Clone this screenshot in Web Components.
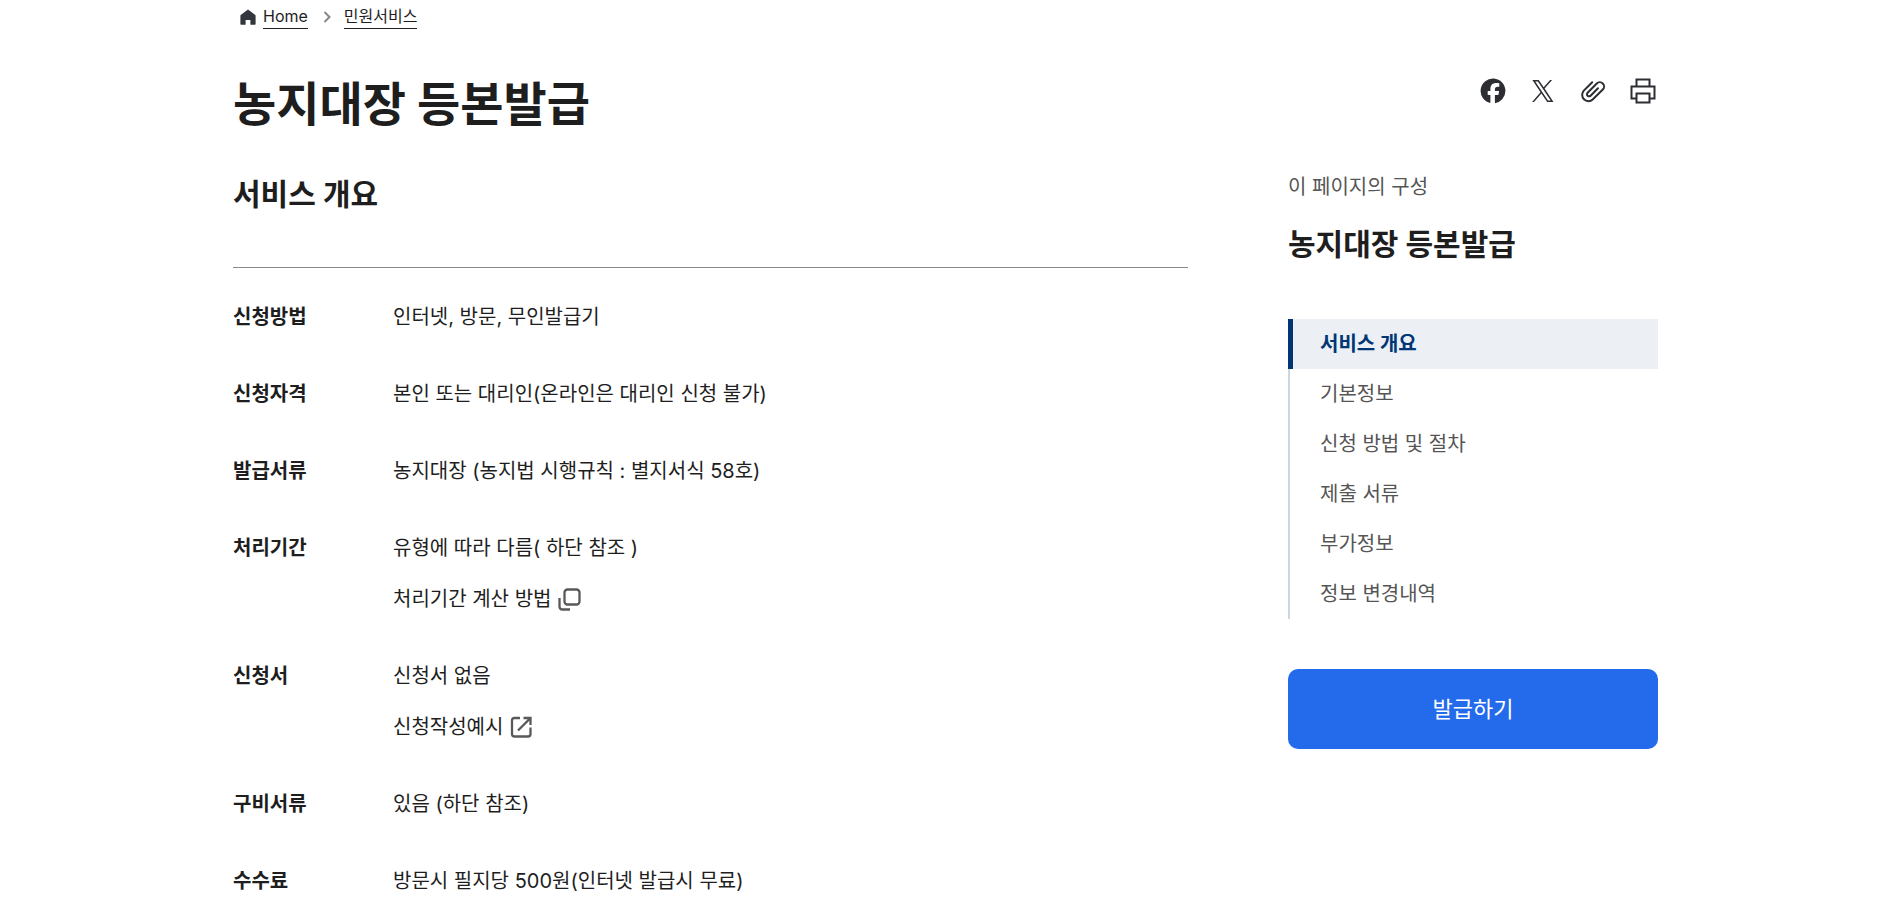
<!DOCTYPE html>
<html lang="ko">
<head>
<meta charset="utf-8">
<meta name="viewport" content="width=device-width, initial-scale=1">
<title>농지대장 등본발급</title>
<style>
  body {
    margin: 0;
    background: #fff;
    color: #1e1e1e;
    font: 400 20px/30px Inter, "Noto Sans CJK KR", sans-serif;
    word-break: keep-all;
  }
</style>
</head>
<body>
<service-page>
  <bread-crumb slot="path"></bread-crumb>
  <span slot="title">농지대장 등본발급</span>
  <share-tools slot="tools"></share-tools>
  <service-overview slot="content"></service-overview>
  <page-toc slot="side">
    <span slot="title">농지대장 등본발급</span>
    <action-button slot="action">발급하기</action-button>
  </page-toc>
</service-page>

<script>
function define(name, html) {
  const template = document.createElement('template');
  template.innerHTML = '<style>*{box-sizing:border-box}a{color:inherit;text-decoration:none}svg{display:block;flex:none}h1,h2{font-weight:700}</style>' + html;
  customElements.define(name, class extends HTMLElement {
    constructor() {
      super();
      this.attachShadow({ mode: 'open' }).append(template.content.cloneNode(true));
    }
  });
}

define('bread-crumb', `
<style>
  :host { display: block; font-size: 16px; line-height: 24px; }
  ol { display: flex; align-items: center; list-style: none; margin: 0; padding: 4px 0 0 6px; }
  li { display: flex; align-items: center; }
  .home { gap: 6px; }
  .sep { margin: 0 8px 0 10px; }
  a { border-bottom: 1px solid #1e1e1e; }
</style>
<nav aria-label="현재 위치"><ol>
  <li class="home"><svg width="18" height="18" viewBox="0 0 18 18" aria-hidden="true"><path fill="#33363d" d="M9 1.5 1.7 7.1c-.2.2-.3.4-.3.7V16c0 .5.3.7.8.7h4.4v-4.8h4.8v4.8h4.4c.5 0 .8-.2.8-.7V7.8c0-.3-.1-.5-.3-.7z"/></svg><a href="#">Home</a></li>
  <li><svg class="sep" width="18" height="18" viewBox="0 0 18 18" fill="none" stroke="#8a858c" stroke-width="2" aria-hidden="true"><path d="m6.500 4 5 5-5 5"/></svg><a href="#">민원서비스</a></li>
</ol></nav>`);

define('share-tools', `
<style>
  :host { display: block; }
  ul { display: flex; gap: 20px; list-style: none; margin: 0; padding: 0; }
  button { display: flex; width: 30px; height: 30px; align-items: center; justify-content: center; padding: 0; border: 0; background: none; color: #2c2e33; cursor: pointer; }
</style>
<ul>
  <li><button type="button" aria-label="페이스북 공유"><svg width="26" height="26" viewBox="0 0 26 26"><path fill="currentColor" d="M25.4 13A12.4 12.4 0 1 0 10.4 25.1v-8.2H7.7V13h2.7v-1.7c0-4.4 2-6.4 6.2-6.4.8 0 2.1.2 2.7.3v3.5h-1.5c-2.1 0-2.9.8-2.9 2.9V13h4.2l-.7 3.9h-3.5v8.4A12.4 12.4 0 0 0 25.4 13z"/></svg></button></li>
  <li><button type="button" aria-label="X 공유"><svg width="24" height="24" viewBox="0 0 24 24"><path fill="currentColor" fill-rule="evenodd" d="M1.400 1h6.300l5 7.200L19.100 1h2l-7.500 8.500L22.500 23h-6.300l-5.800-8.500L3 23H1.100l8.400-9.800zM4.200 2.500 17 21.500h2.700L6.900 2.500z"/></svg></button></li>
  <li><button type="button" aria-label="주소 복사"><svg width="26" height="26" viewBox="0 0 26 26" fill="none" stroke="currentColor" stroke-width="2" stroke-linecap="round"><path d="m18 10.300-7.400 7.400a2.100 2.100 0 0 1-3-3l9.200-9.200a4.200 4.200 0 0 1 6 6L12.700 21.500a6.300 6.300 0 0 1-8.900-8.900l8.400-8.400"/></svg></button></li>
  <li><button type="button" aria-label="인쇄"><svg width="26" height="26" viewBox="0 0 26 26" fill="none" stroke="currentColor" stroke-width="2"><path d="M6.500 8.500V1.500h13v7M6.500 20.500H1.500V8.500h23v12h-5M6.500 15.500h13v9h-13z"/></svg></button></li>
</ul>`);

define('service-overview', `
<style>
  :host { display: block; }
  h2 { margin: 0; font-size: 30px; line-height: 44px; }
  dl { margin: 51px 0 0; padding: 34px 0 40px; border-top: 1px solid #8a8a8a; display: grid; gap: 47px; }
  .row { display: grid; grid-template-columns: 160px 1fr; }
  dt { font-weight: 700; }
  dd { margin: 0; display: grid; gap: 21px; justify-items: start; }
  a { display: flex; align-items: center; gap: 6px; }
</style>
<section aria-labelledby="overview">
<h2 id="overview">서비스 개요</h2>
<dl>
  <div class="row"><dt>신청방법</dt><dd>인터넷, 방문, 무인발급기</dd></div>
  <div class="row"><dt>신청자격</dt><dd>본인 또는 대리인(온라인은 대리인 신청 불가)</dd></div>
  <div class="row"><dt>발급서류</dt><dd>농지대장 (농지법 시행규칙 : 별지서식 58호)</dd></div>
  <div class="row"><dt>처리기간</dt><dd><span>유형에 따라 다름( 하단 참조 )</span><a href="#">처리기간 계산 방법<svg width="24" height="24" viewBox="0 0 24 24" fill="none" stroke="#58595b" stroke-width="2.300" aria-hidden="true"><rect x="7.500" y="2.500" width="15" height="15" rx="3"/><path d="M2.500 11v8.500q0 3 3 3h7.500"/></svg></a></dd></div>
  <div class="row"><dt>신청서</dt><dd><span>신청서 없음</span><a href="#">신청작성예시<svg width="24" height="24" viewBox="0 0 24 24" fill="none" stroke="#58595b" stroke-width="2.300" aria-hidden="true"><path d="M11 3H5.500Q3 3 3 5.500v13.500Q3 21.500 5.500 21.500h13.500q2.500 0 2.500-2.500V12.500M9 15.500 21 3.500M14.500 3h7v7"/></svg></a></dd></div>
  <div class="row"><dt>구비서류</dt><dd>있음 (하단 참조)</dd></div>
  <div class="row"><dt>수수료</dt><dd>방문시 필지당 500원(인터넷 발급시 무료)</dd></div>
</dl>
</section>`);

define('page-toc', `
<style>
  :host { display: block; }
  p { margin: 0; color: #555; }
  h2 { margin: 20px 0 53px; font-size: 30px; line-height: 44px; }
  ul { list-style: none; margin: 0 0 50px; padding: 0; }
  a { display: block; padding: 10px 0 10px 30px; border-left: 2px solid #cdd6e1; color: #555; }
  a[aria-current] { padding-left: 27px; border-left: 5px solid #003675; background: #ecf0f5; color: #003675; font-weight: 700; }
</style>
<p>이 페이지의 구성</p>
<h2><slot name="title"></slot></h2>
<nav aria-label="이 페이지의 구성"><ul>
  <li><a href="#" aria-current="true">서비스 개요</a></li>
  <li><a href="#">기본정보</a></li>
  <li><a href="#">신청 방법 및 절차</a></li>
  <li><a href="#">제출 서류</a></li>
  <li><a href="#">부가정보</a></li>
  <li><a href="#">정보 변경내역</a></li>
</ul></nav>
<slot name="action"></slot>`);

define('action-button', `
<style>
  :host { display: block; }
  button { display: block; width: 100%; padding: 24px; border: 0; border-radius: 10px; background: #246beb; color: #fff; font: inherit; font-size: 22px; line-height: 32px; cursor: pointer; }
</style>
<button type="button"><slot></slot></button>`);

define('service-page', `
<style>
  :host { display: block; padding: 0 4px 0 0; }
  .wrap { max-width: 1425px; margin: 0 auto; }
  header { display: flex; justify-content: space-between; align-items: flex-start; margin-top: 41px; }
  h1 { margin: 0; font-size: 47px; line-height: 68px; }
  .tools { margin-top: 6px; }
  .cols { display: grid; grid-template-columns: minmax(0, 1fr) 370px; gap: 100px; margin-top: 34px; }
</style>
<div class="wrap">
  <slot name="path"></slot>
  <header><h1><slot name="title"></slot></h1><div class="tools"><slot name="tools"></slot></div></header>
  <div class="cols"><main><slot name="content"></slot></main><aside><slot name="side"></slot></aside></div>
</div>`);
</script>
</body>
</html>
